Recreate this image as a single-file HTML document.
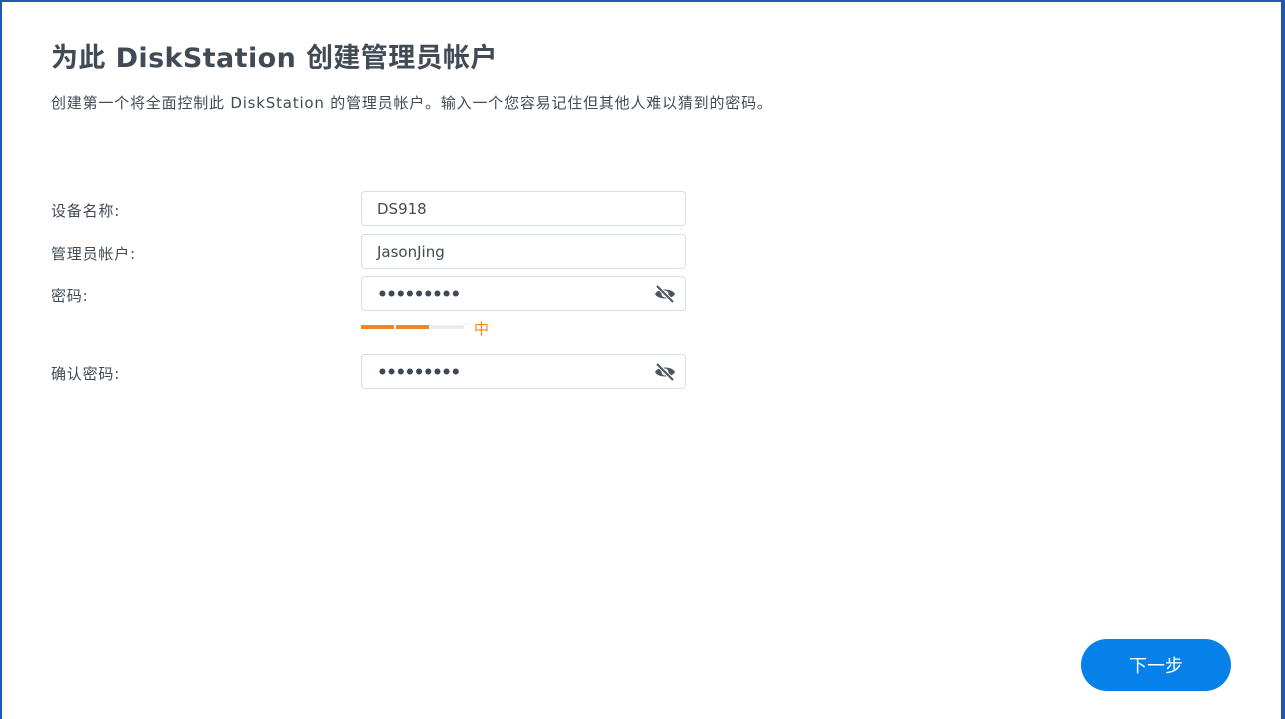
<!DOCTYPE html>
<html><head><meta charset="utf-8"><style>
*{margin:0;padding:0;box-sizing:border-box}
body{width:1285px;height:719px;overflow:hidden;background:#fff;font-family:"DejaVu Sans","Noto Sans CJK SC",sans-serif;color:#414b55;position:relative}
.frame{position:absolute;left:0;top:0;width:1285px;height:719px;border-left:2px solid #2356b4;border-top:2px solid #2356b4;border-right:4px solid #2356b4}
h1{position:absolute;left:51px;top:36px;font-size:27px;font-weight:bold;color:#414b55;white-space:nowrap;letter-spacing:0.4px}
.desc{position:absolute;left:51px;top:92px;font-size:15px;white-space:nowrap;letter-spacing:0.8px}
.lbl{position:absolute;left:51px;font-size:15px;letter-spacing:0.8px}
.inp{position:absolute;left:361px;width:325px;height:35px;border:1px solid #d6dfe8;border-radius:4px;font-size:15px;padding:8px 0 0 15px;color:#414b55}
.dots{letter-spacing:-1.7px;font-size:17px;padding-top:8px;font-weight:bold;color:#3f4955}
.eye{position:absolute;right:9px;top:8px}
.bar{position:absolute;top:325px;height:4px}
.btn{position:absolute;left:1081px;top:639px;width:150px;height:52px;border-radius:26px;background:#0781ea;color:#fff;font-size:18px;text-align:center;line-height:55px}
</style></head><body>
<div class="frame"></div>
<h1>为此 DiskStation 创建管理员帐户</h1>
<div class="desc">创建第一个将全面控制此 DiskStation 的管理员帐户。输入一个您容易记住但其他人难以猜到的密码。</div>
<div class="lbl" style="top:200px">设备名称:</div>
<div class="inp" style="top:191px">DS918</div>
<div class="lbl" style="top:243px">管理员帐户:</div>
<div class="inp" style="top:234px">JasonJing</div>
<div class="lbl" style="top:285px">密码:</div>
<div class="inp dots" style="top:276px">•••••••••<svg class="eye" width="22" height="18" viewBox="0 0 22 18"><path d="M1 9C4 3 18 3 21 9C18 15 4 15 1 9Z" fill="#4b5560"/><circle cx="11" cy="9" r="3.5" fill="#fff"/><circle cx="11" cy="9" r="2" fill="#4b5560"/><path d="M3 1L19 17" stroke="#fff" stroke-width="4"/><path d="M3 1L19 17" stroke="#4b5560" stroke-width="2"/></svg></div>
<div class="bar" style="left:361px;width:33px;background:#f4841c"></div>
<div class="bar" style="left:396px;width:33px;background:#f4841c"></div>
<div class="bar" style="left:431px;width:33px;background:#e8edf2"></div>
<div style="position:absolute;left:474px;top:318px;font-size:15px;color:#f4841c">中</div>
<div class="lbl" style="top:363px">确认密码:</div>
<div class="inp dots" style="top:354px">•••••••••<svg class="eye" width="22" height="18" viewBox="0 0 22 18"><path d="M1 9C4 3 18 3 21 9C18 15 4 15 1 9Z" fill="#4b5560"/><circle cx="11" cy="9" r="3.5" fill="#fff"/><circle cx="11" cy="9" r="2" fill="#4b5560"/><path d="M3 1L19 17" stroke="#fff" stroke-width="4"/><path d="M3 1L19 17" stroke="#4b5560" stroke-width="2"/></svg></div>
<div class="btn">下一步</div>
</body></html>
